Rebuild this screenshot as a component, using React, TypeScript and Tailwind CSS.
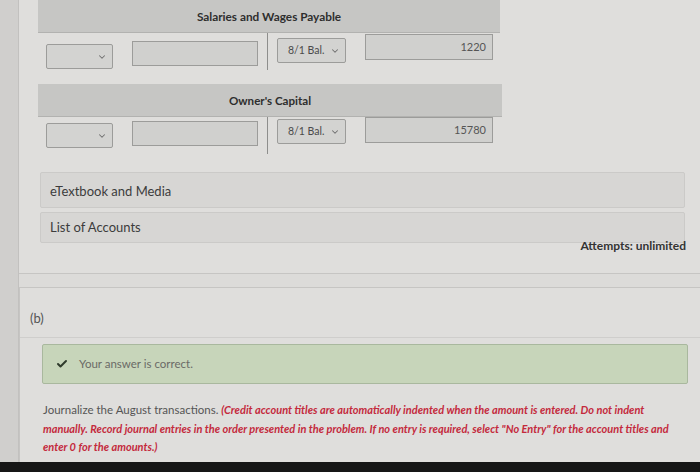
import React from "react";
import { ChevronDown, Check } from "lucide-react";

const font = { fontFamily: "Lato, 'Open Sans', sans-serif" };

function Sel({ w, mt, label }: { w: string; mt: string; label?: string }) {
  return (
    <div
      className={`${w} ${mt} h-[25px] shrink-0 flex items-center justify-between pl-[10px] pr-[5px] bg-[#d3d3d1] border border-[#9c9c9a] rounded-[2px]`}
    >
      <span className="text-[10.5px] text-[#4a4a4a]">{label ?? ""}</span>
      <ChevronDown size={10} strokeWidth={2.5} className="text-[#6f6f6f]" />
    </div>
  );
}

function TRow({ value, tops }: { value: string; tops: string[] }) {
  return (
    <div className="flex items-start h-[37px]">
      <div className="w-[8px] shrink-0" />
      <Sel w="w-[67px]" mt={tops[0]} />
      <div className={`ml-[19px] ${tops[1]} w-[126px] h-[25px] shrink-0 bg-[#d0d0ce] border border-[#9c9c9a]`} />
      <div className="ml-[9px] w-px h-[37px] bg-[#8e8e8c] shrink-0" />
      <div className="ml-[9px] shrink-0">
        <Sel w="w-[69px]" mt={tops[2]} label="8/1 Bal." />
      </div>
      <div
        className={`ml-[19px] ${tops[3]} w-[128px] h-[26px] shrink-0 bg-[#d0d0ce] border border-[#9c9c9a] flex items-center justify-end pr-[6px] text-[11px] text-[#555]`}
      >
        {value}
      </div>
    </div>
  );
}

export default function App() {
  return (
    <div className="w-[700px] h-[472px] overflow-hidden flex flex-col bg-[#dcdbd9]" style={font}>
      <div className="flex h-[462px]">
        <div className="w-[19px] shrink-0 bg-[#d0cfcd] border-r border-[#c2c1bf]" />
        <div className="flex-1 flex flex-col">
          {/* Panel 1 */}
          <div className="h-[274px] border-b border-[#c6c5c3] bg-[#dfdedc] flex flex-col">
            {/* T account 1 */}
            <div className="ml-[19px] w-[462px]">
              <div className="h-[33px] bg-[#c6c6c4] flex items-center justify-center pt-[2px] border-b border-[#b2b2b0]">
                <span className="text-[11.8px] font-bold text-[#2e2e2e]">Salaries and Wages Payable</span>
              </div>
              <TRow value="1220" tops={["mt-[11px]", "mt-[8px]", "mt-[5px]", "mt-[1px]"]} />
            </div>
            {/* T account 2 */}
            <div className="ml-[19px] w-[464px] mt-[14px]">
              <div className="h-[33px] bg-[#c6c6c4] flex items-center justify-center pt-[1px] border-b border-[#b2b2b0]">
                <span className="text-[11.6px] font-bold text-[#2e2e2e]">Owner's Capital</span>
              </div>
              <TRow value="15780" tops={["mt-[6px]", "mt-[4px]", "mt-[2px]", "mt-[0px]"]} />
            </div>
            {/* Links */}
            <div className="ml-[21px] w-[645px] mt-[18px] h-[36px] bg-[#d7d6d4] border border-[#cbcac8] rounded-[2px] flex items-center pl-[9px] pt-[3px]">
              <span className="text-[13px] text-[#3c3c3c]">eTextbook and Media</span>
            </div>
            <div className="ml-[21px] w-[645px] mt-[4px] h-[31px] bg-[#d7d6d4] border border-[#cbcac8] rounded-[2px] flex items-center pl-[9px]">
              <span className="text-[13px] text-[#3c3c3c]">List of Accounts</span>
            </div>
            <div className="flex justify-end pr-[14px] mt-[-6px]">
              <span className="text-[12px] font-bold text-[#333]">Attempts: unlimited</span>
            </div>
          </div>
          {/* Panel 2 */}
          <div className="mt-[13px] flex-1 border-t border-l border-[#c6c5c3] bg-[#dfdedc] flex flex-col">
            <div className="h-[50px] border-b border-[#cfcecc] flex items-center pl-[10px] pt-[12px]">
              <span className="text-[13px] text-[#555]">(b)</span>
            </div>
            <div className="ml-[22px] mr-[12px] mt-[6px] h-[40px] bg-[#c7d5ba] border border-[#a9b89e] rounded-[2px] flex items-center pl-[13px]">
              <Check size={12} strokeWidth={4} className="text-[#2f3b2c]" />
              <span className="ml-[11px] text-[11.5px] text-[#6a6a66]">Your answer is correct.</span>
            </div>
            <div className="ml-[23px] mt-[16px] leading-[16.5px] whitespace-nowrap">
              <span className="text-[11.5px] text-[#555]">Journalize the August transactions. </span>
              <span className="text-[11px] text-[#c42a3c] italic font-bold">
                (Credit account titles are automatically indented when the amount is entered. Do not indent
                <br />
                manually. Record journal entries in the order presented in the problem. If no entry is required, select "No Entry" for the account titles and
                <br />
                enter 0 for the amounts.)
              </span>
            </div>
          </div>
        </div>
      </div>
      <div className="h-[10px] bg-[#161616]" />
    </div>
  );
}
